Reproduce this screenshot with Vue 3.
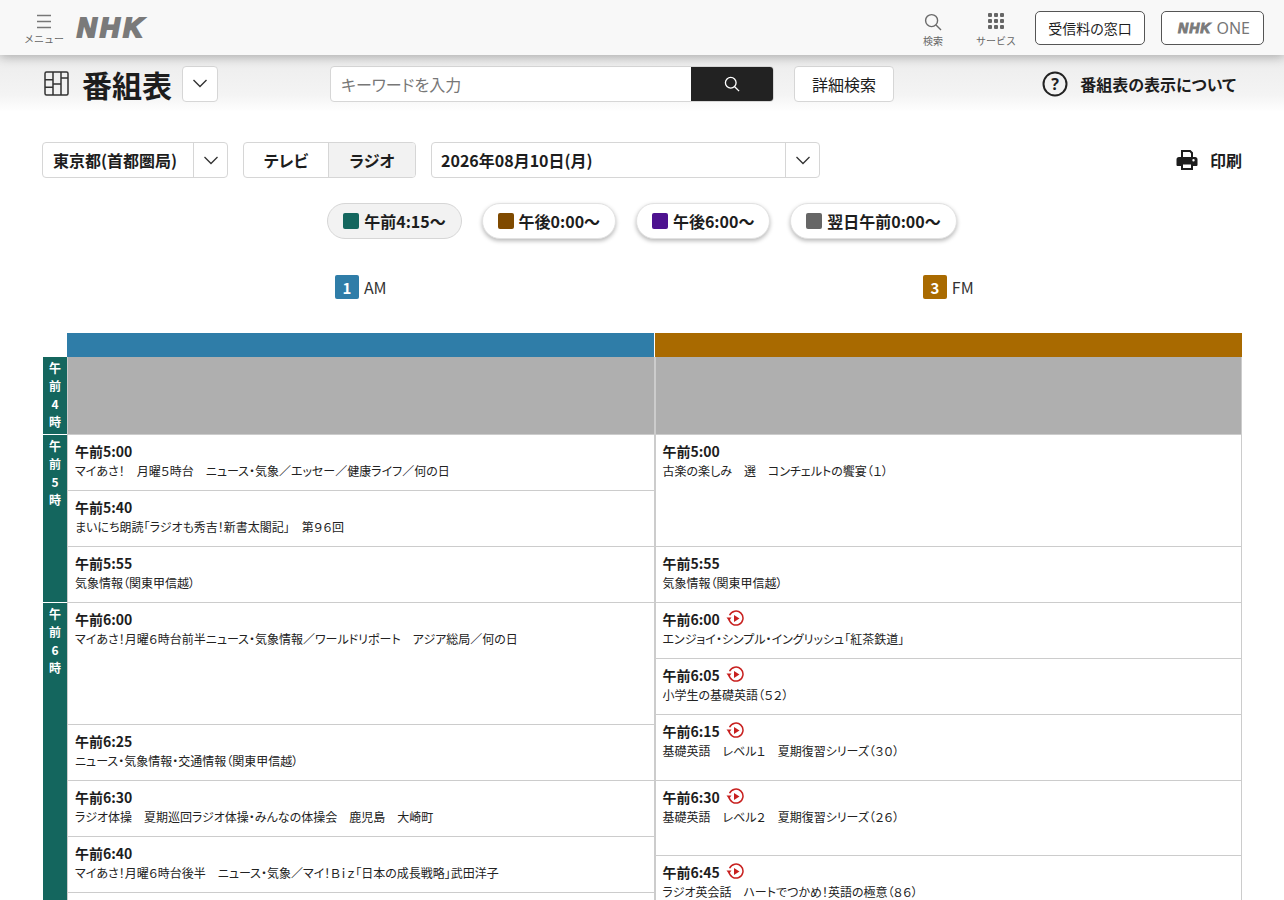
<script setup>
const hours = [
  { label: ['午', '前', '4', '時'], h: 77 },
  { label: ['午', '前', '5', '時'], h: 167 },
  { label: ['午', '前', '6', '時'], h: 320 },
]
const am = [
  { t: '午前5:00', d: 'マイあさ！　月曜５時台　ニュース・気象／エッセー／健康ライフ／何の日', h: 56 },
  { t: '午前5:40', d: 'まいにち朗読「ラジオも秀吉！新書太閤記」　第９６回', h: 56 },
  { t: '午前5:55', d: '気象情報（関東甲信越）', h: 56 },
  { t: '午前6:00', d: 'マイあさ！月曜６時台前半ニュース・気象情報／ワールドリポート　アジア総局／何の日', h: 122 },
  { t: '午前6:25', d: 'ニュース・気象情報・交通情報（関東甲信越）', h: 56 },
  { t: '午前6:30', d: 'ラジオ体操　夏期巡回ラジオ体操・みんなの体操会　鹿児島　大崎町', h: 56 },
  { t: '午前6:40', d: 'マイあさ！月曜６時台後半　ニュース・気象／マイ！Ｂｉｚ「日本の成長戦略」武田洋子', h: 56 },
  { t: '', d: '', h: 60 },
]
const fm = [
  { t: '午前5:00', d: '古楽の楽しみ　選　コンチェルトの饗宴（１）', h: 112 },
  { t: '午前5:55', d: '気象情報（関東甲信越）', h: 56 },
  { t: '午前6:00', d: 'エンジョイ・シンプル・イングリッシュ「紅茶鉄道」', h: 56, p: true },
  { t: '午前6:05', d: '小学生の基礎英語（５２）', h: 56, p: true },
  { t: '午前6:15', d: '基礎英語　レベル１　夏期復習シリーズ（３０）', h: 66, p: true },
  { t: '午前6:30', d: '基礎英語　レベル２　夏期復習シリーズ（２６）', h: 75, p: true },
  { t: '午前6:45', d: 'ラジオ英会話　ハートでつかめ！英語の極意（８６）', h: 75, p: true },
]
const columns = [am, fm]
const jumps = [
  { label: '午前4:15〜', color: '#14665e', active: true },
  { label: '午後0:00〜', color: '#7f4a00' },
  { label: '午後6:00〜', color: '#4d128f' },
  { label: '翌日午前0:00〜', color: '#666666' },
]
</script>

<template>
  <div class="page">
    <header class="top">
      <button class="menu">
        <svg width="16" height="15" viewBox="0 0 16 15"><path d="M1 1.5h14M1 7.5h14M1 13.5h14" stroke="#777" stroke-width="1.3" fill="none"/></svg>
        <span>メニュー</span>
      </button>
      <span class="nhk">NHK</span>
      <div class="spacer"></div>
      <div class="tool t-search">
        <svg width="18" height="18" viewBox="0 0 18 18" fill="none" stroke="#6a6a6a" stroke-width="1.4"><circle cx="7.6" cy="7.6" r="6"/><path d="M12 12l5 5"/></svg>
        <span>検索</span>
      </div>
      <div class="tool t-service">
        <svg width="16" height="16" viewBox="0 0 16 16" fill="#666"><rect v-for="p in [[0,0],[6,0],[12,0],[0,6],[6,6],[12,6],[0,12],[6,12],[12,12]]" :key="p.join()" :x="p[0]" :y="p[1]" width="4" height="4" rx="1"/></svg>
        <span>サービス</span>
      </div>
      <a class="topbtn b1">受信料の窓口</a>
      <a class="topbtn b2"><span class="nhk small">NHK</span><span class="one">ONE</span></a>
    </header>

    <section class="sub">
      <svg class="gridicon" width="25" height="25" viewBox="0 0 25 25" fill="none" stroke="#333" stroke-width="1.5"><rect x="1" y="1" width="23" height="23" rx="1.500"/><path d="M9 1v23M17 1v23M1 8.700h8M1 16.300h8M9 13h8M17 7h7"/></svg>
      <h1>番組表</h1>
      <button class="chev-box"><svg class="chev" width="16" height="9" viewBox="0 0 16 9"><path d="M1.500 1l6.500 6.500L14.500 1" fill="none" stroke="#333" stroke-width="1.400"/></svg></button>
      <div class="search">
        <span class="ph">キーワードを入力</span>
        <button class="sbtn"><svg width="16" height="16" viewBox="0 0 18 18" fill="none" stroke="#fff" stroke-width="1.500"><circle cx="7.600" cy="7.600" r="6"/><path d="M12 12l5 5"/></svg></button>
      </div>
      <button class="detail">詳細検索</button>
      <div class="spacer"></div>
      <a class="about">
        <svg width="26" height="26" viewBox="0 0 26 26"><circle cx="13" cy="13" r="11.500" fill="none" stroke="#222" stroke-width="2"/><text x="13" y="18.500" text-anchor="middle" class="q">?</text></svg>
        <span>番組表の表示について</span>
      </a>
    </section>

    <main class="main">
      <div class="controls">
        <div class="select area"><span>東京都(首都圏局)</span><i><svg class="chev" width="16" height="9" viewBox="0 0 16 9"><path d="M1.500 1l6.500 6.500L14.500 1" fill="none" stroke="#333" stroke-width="1.300"/></svg></i></div>
        <div class="seg"><span class="off">テレビ</span><span class="on">ラジオ</span></div>
        <div class="select date"><span>2026年08月10日(月)</span><i><svg class="chev" width="16" height="9" viewBox="0 0 16 9"><path d="M1.500 1l6.500 6.500L14.500 1" fill="none" stroke="#333" stroke-width="1.300"/></svg></i></div>
        <div class="spacer"></div>
        <a class="print">
          <svg width="22" height="22" viewBox="0 0 22 22" fill="#1d1d1d"><path d="M5 1h9.500L17 3.500V8h-2V4.500L13.700 3H7v5H5z"/><path d="M3 8h16a2.500 2.500 0 0 1 2.500 2.500V16a1 1 0 0 1-1 1H17v4H5v-4H1.500a1 1 0 0 1-1-1v-5.500A2.500 2.500 0 0 1 3 8zm4 7.500V19h8v-3.500zM17.500 10a1.200 1.200 0 1 0 0 2.400 1.200 1.200 0 0 0 0-2.400z" fill-rule="evenodd"/></svg>
          <span>印刷</span>
        </a>
      </div>

      <div class="jumps">
        <button v-for="j in jumps" :key="j.label" class="jump" :class="{ active: j.active }">
          <i :style="{ background: j.color }"></i>{{ j.label }}
        </button>
      </div>

      <div class="channels">
        <div class="ch"><b class="c1">1</b><span>AM</span></div>
        <div class="ch"><b class="c3">3</b><span>FM</span></div>
      </div>

      <div class="bars"><div class="c1"></div><div class="c3"></div></div>

      <div class="table">
        <div class="hours">
          <div v-for="(h, i) in hours" :key="i" class="hour" :style="{ height: h.h + 'px' }">
            <span v-for="(c, k) in h.label" :key="k">{{ c }}</span>
          </div>
        </div>
        <div v-for="(col, ci) in columns" :key="ci" class="col">
          <div class="blank"></div>
          <div v-for="(p, pi) in col" :key="pi" class="prog" :style="{ height: p.h + 'px' }">
            <div class="time">{{ p.t }}
              <svg v-if="p.p" class="play" width="19" height="17" viewBox="0 0 19 17" fill="none"><path d="M3.600 5.200A7 7 0 1 1 3 8.500" stroke="#c8201f" stroke-width="1.500"/><path d="M0.500 7.500h5L3 10.800z" fill="#c8201f"/><path d="M8 5l5.500 3.500L8 12z" fill="#c8201f"/></svg>
            </div>
            <div class="desc">{{ p.d }}</div>
          </div>
        </div>
      </div>
    </main>
  </div>
</template>

<style>
html, body { margin: 0; background: #fff; overflow: hidden; }
</style>

<style scoped>
.page {
  width: 1284px; height: 900px; overflow: hidden;
  font-family: "Noto Sans CJK JP", "Noto Sans", sans-serif;
  font-feature-settings: "palt";
  color: #1d1d1d;
}
button { font-family: inherit; font-feature-settings: inherit; padding: 0; cursor: pointer; }
.spacer { flex: 1; }

.top {
  position: relative; z-index: 2;
  height: 55px; box-sizing: border-box;
  background: #f8f8f8;
  box-shadow: 0 2px 10px rgba(0,0,0,.28);
  display: flex; align-items: center;
  padding: 0 20px 0 24px;
}
.menu {
  border: 0; background: none; width: 40px; margin-top: 3px;
  display: flex; flex-direction: column; align-items: center; gap: 4px;
  color: #666; font-size: 10px; line-height: 12px;
  font-feature-settings: normal;
}
.nhk {
  font-family: "Liberation Sans", sans-serif;
  font-weight: 700; font-style: italic;
  font-size: 27px; line-height: 26px; letter-spacing: 3.600px;
  color: #7a7a7a; -webkit-text-stroke: 2.200px #7a7a7a;
  margin-left: 13px; margin-top: 1px;
}
.tool {
  display: flex; flex-direction: column; align-items: center; gap: 4px;
  font-size: 10px; line-height: 12px; color: #666; margin-top: 5px;
  font-feature-settings: normal;
}
.t-search { width: 24px; margin-right: 31px; }
.t-service { width: 40px; margin-right: 19px; }
.t-service svg { margin-bottom: 2px; }
.topbtn {
  box-sizing: border-box; height: 34px; border: 1px solid #555; border-radius: 5px;
  display: flex; align-items: center; justify-content: center;
  background: #fff; font-size: 14px; margin-top: 1px;
}
.b1 { width: 110px; margin-right: 16px; }
.b2 { width: 103px; gap: 5px; padding-left: 3px; }
.nhk.small { font-size: 14px; line-height: 14px; margin: 0; letter-spacing: 1px; -webkit-text-stroke-width: 1px; }
.one { font-family: "Noto Sans", sans-serif; font-size: 16px; color: #777; }

.sub {
  height: 57px; box-sizing: border-box;
  background: linear-gradient(#ececec, #f4f4f4 70%, #fff);
  display: flex; align-items: center;
  padding: 0 48px 0 44px;
}
.gridicon { margin-right: 13px; }
h1 { margin: 0 10px 0 0; font-size: 30px; font-weight: 700; line-height: 40px; }
.chev-box {
  width: 36px; height: 36px; background: #fff; border: 1px solid #d6d6d6; border-radius: 4px;
  display: flex; align-items: center; justify-content: center;
}
.search {
  width: 444px; height: 36px; margin-left: 112px;
  display: flex; background: #fff; border: 1px solid #d6d6d6; border-radius: 4px;
  box-sizing: border-box; overflow: hidden;
}
.ph { flex: 1; padding-left: 10px; font-size: 16px; line-height: 34px; color: #777; }
.sbtn {
  width: 82px; border: 0; background: #222;
  display: flex; align-items: center; justify-content: center;
}
.detail {
  width: 100px; height: 36px; margin-left: 20px; background: #fff;
  border: 1px solid #d6d6d6; border-radius: 4px; font-size: 16px; color: #1d1d1d;
}
.about { display: flex; align-items: center; gap: 12px; font-size: 16px; font-weight: 700; }
.q { font: 700 16px "Noto Sans", sans-serif; fill: #222; }

.main { padding: 0 42px 0 43px; }
.controls { display: flex; align-items: center; padding-top: 30px; height: 36px; }
.select {
  box-sizing: border-box; height: 36px; display: flex; align-items: center;
  background: #fff; border: 1px solid #d6d6d6; border-radius: 4px;
  font-size: 16px; font-weight: 700;
}
.select span { flex: 1; padding-left: 10px; }
.select.date span { padding-left: 9px; }
.select i {
  width: 34px; height: 34px; border-left: 1px solid #d6d6d6;
  display: flex; align-items: center; justify-content: center; box-sizing: border-box;
}
.select.area { width: 186px; margin-left: -1px; }
.select.date { width: 389px; }
.seg {
  box-sizing: border-box; width: 173px; height: 36px; margin: 0 15px;
  display: flex; border: 1px solid #d6d6d6; border-radius: 4px; overflow: hidden;
  font-size: 16px; font-weight: 700;
}
.seg span { flex: 1; display: flex; align-items: center; justify-content: center; }
.seg .off { flex: none; width: 84px; }
.seg .on { background: #f2f2f2; border-left: 1px solid #d6d6d6; }
.print { display: flex; align-items: center; gap: 12px; font-size: 16px; font-weight: 700; }

.jumps { display: flex; justify-content: center; gap: 19.800px; margin: 25px 0 0 -1px; }
.jump {
  height: 36px; padding: 0 15px; box-sizing: border-box;
  display: flex; align-items: center; gap: 5px;
  border: 1px solid #e2e2e2; border-radius: 18px; background: #fff;
  box-shadow: 0 2px 4px rgba(0,0,0,.28);
  font-size: 16px; font-weight: 700; color: #1d1d1d;
}
.jump.active { background: #f2f2f2; border-color: #d6d6d6; box-shadow: none; }
.jump i { width: 16px; height: 16px; border-radius: 2px; }

.channels { display: flex; margin-top: 36px; padding-left: 24px; height: 24px; }
.ch { flex: 1; display: flex; align-items: center; justify-content: center; gap: 5px; font-size: 16px; color: #333; }
.ch b {
  width: 24px; height: 24px; border-radius: 2px; color: #fff; font-size: 15px;
  display: flex; align-items: center; justify-content: center;
}
.c1 { background: #2f7da8; }
.c3 { background: #a96a00; }

.bars { display: flex; margin-top: 34px; margin-left: 24px; height: 24px; }
.bars div { flex: 1; }
.bars div + div { margin-left: 1px; }

.table { display: flex; }
.hours { width: 24px; flex: none; }
.hour {
  background: #14665e; color: #fff; box-sizing: border-box; margin-bottom: 1px;
  display: flex; flex-direction: column; align-items: center; padding-top: 2px;
  font-size: 12px; font-weight: 700; line-height: 18px;
}
.col { flex: 1; min-width: 0; border-left: 1px solid #ccc; border-right: 1px solid #ccc; box-sizing: border-box; }
.col:last-child { border-left: 2px solid #ccc; margin-left: -1px; }
.blank { height: 77px; background: #afafaf; }
.prog { box-sizing: border-box; border-top: 1px solid #ccc; padding: 6px 7px 0; }
.time {
  display: flex; align-items: center; gap: 3px;
  font-size: 14px; font-weight: 700; line-height: 20px; height: 20px;
  white-space: pre;
}
.play { margin-top: -1px; }
.desc { font-size: 12px; line-height: 18px; margin-top: 1px; color: #222; white-space: nowrap; }
</style>
